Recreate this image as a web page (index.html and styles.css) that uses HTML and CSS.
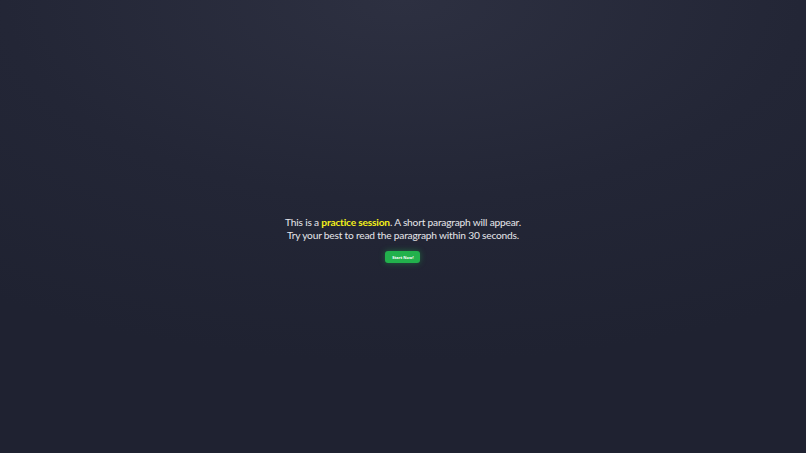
FILE: index.html
```html
<!DOCTYPE html>
<html lang="en">
<head>
  <meta charset="UTF-8">
  <meta name="viewport" content="width=device-width, initial-scale=1.0">
  <title>Reading Practice</title>
  <link rel="stylesheet" href="styles.css">
</head>
<body>
  <div class="screen">
    <div class="intro">
      <p class="intro-text">
        This is a <span class="highlight">practice session</span>. A short paragraph will appear.<br>
        Try your best to read the paragraph within 30 seconds.
      </p>
      <button class="start-btn">Start Now!</button>
    </div>
  </div>
</body>
</html>
```

FILE: styles.css
```css
html, body {
  height: 100%;
}
body {
  margin: 0;
  font-family: Lato, "Noto Sans", sans-serif;
  background: radial-gradient(ellipse 90% 80% at 50% 0%, #2d3041 0%, #232636 55%, #1f2231 100%);
  color: #e6e6ea;
}
.screen {
  height: 100%;
  display: flex;
  align-items: center;
  justify-content: center;
  padding-top: 26px;
  box-sizing: border-box;
}
.intro {
  display: flex;
  flex-direction: column;
  align-items: center;
  gap: 9px;
}
.intro-text {
  margin: 0;
  text-align: center;
  font-size: 10.2px;
  line-height: 13px;
  letter-spacing: -0.2px;
}
.highlight {
  color: #f3f01a;
  font-weight: bold;
}
.start-btn {
  background: #22b14c;
  color: #ffffff;
  border: none;
  border-radius: 3px;
  font-family: "Open Sans", sans-serif;
  font-size: 4px;
  font-weight: bold;
  padding: 0 6px;
  height: 12px;
  width: 35px;
  box-shadow: 0 0 6px rgba(34, 177, 76, 0.45);
  cursor: pointer;
}
```
